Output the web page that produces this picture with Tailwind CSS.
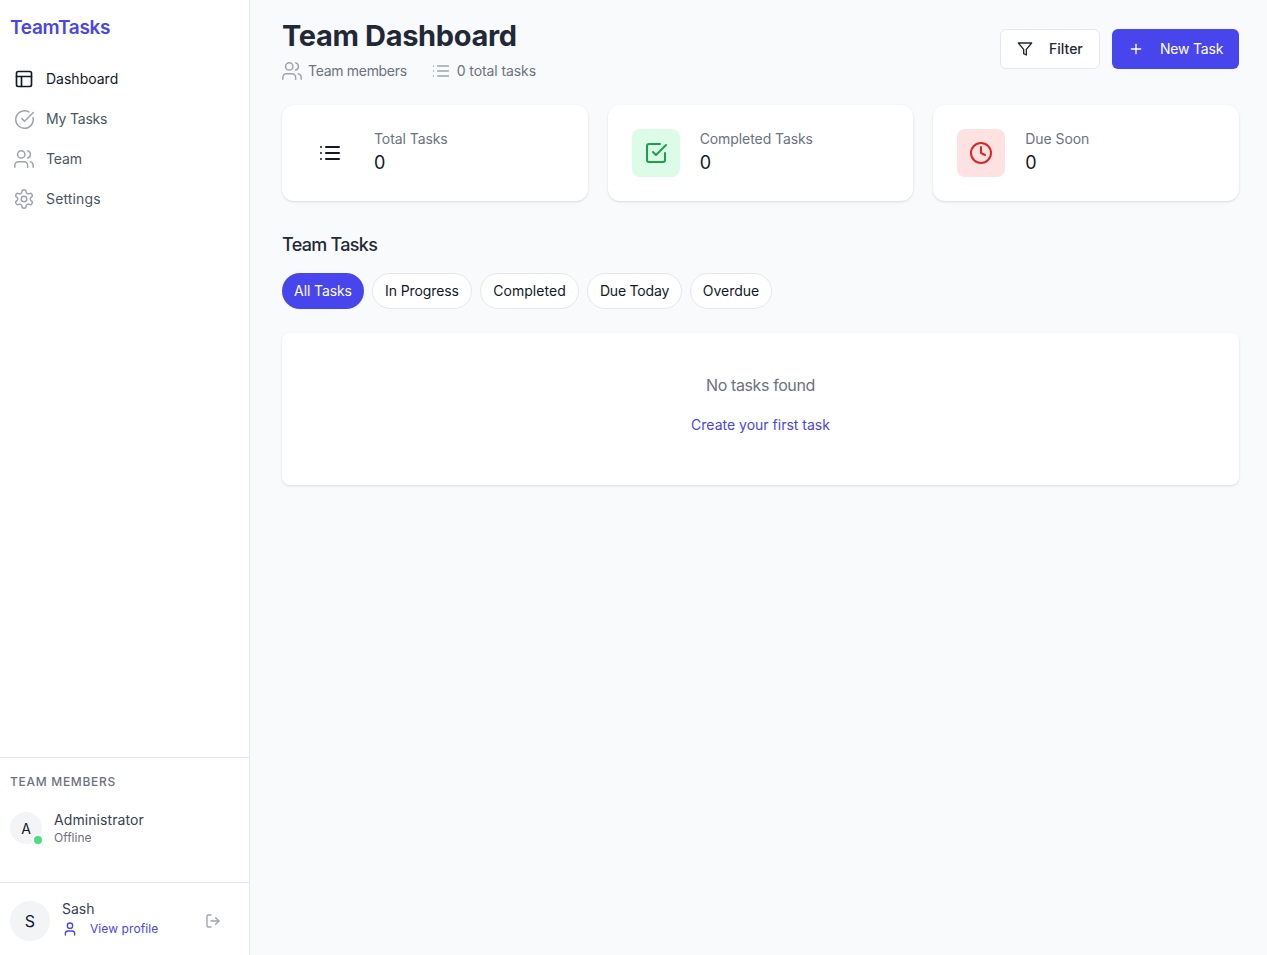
<!DOCTYPE html>
<html lang="en">
<head>
<meta charset="utf-8">
<title>TeamTasks</title>
<script src="https://cdn.jsdelivr.net/npm/@tailwindcss/browser@4"></script>
</head>
<body class="font-['Inter',sans-serif]">
<div class="flex h-[955px] w-[1267px] overflow-hidden bg-[#f9fafb]">
  <aside class="flex w-[250px] shrink-0 flex-col border-r border-[#e5e7eb] bg-white">
    <div class="flex-1">
      <div class="h-[59px] pl-[10px] pt-[14px] text-[19px] leading-[28px] font-semibold tracking-[-0.3px] text-[#4845ed]">TeamTasks</div>
      <nav class="flex flex-col px-[4px] text-[14px] leading-[20px]">
        <a class="flex h-[40px] items-center gap-[12px] px-[10px] text-[#111827]">
          <svg class="h-[20px] w-[20px]" viewBox="0 0 24 24" fill="none" stroke="currentColor" stroke-width="2" stroke-linecap="round" stroke-linejoin="round"><rect x="3" y="3" width="18" height="18" rx="2"/><path d="M3 9h18"/><path d="M9 21V9"/></svg>
          <span>Dashboard</span></a>
        <a class="flex h-[40px] items-center gap-[12px] px-[10px] text-[#4b5563]">
          <svg class="-m-[0.5px] h-[21px] w-[21px] text-[#9ca3af]" viewBox="0 0 24 24" fill="none" stroke="currentColor" stroke-width="1.7" stroke-linecap="round" stroke-linejoin="round"><path d="M21.801 10A10 10 0 1 1 17 3.335"/><path d="m9 11 3 3L22 4"/></svg>
          <span class="tracking-[-0.2px]">My Tasks</span></a>
        <a class="flex h-[40px] items-center gap-[12px] px-[10px] text-[#4b5563]">
          <svg class="-m-[1px] h-[22px] w-[22px] text-[#9ca3af]" viewBox="0 0 24 24" fill="none" stroke="currentColor" stroke-width="1.6" stroke-linecap="round" stroke-linejoin="round"><path d="M16 21v-2a4 4 0 0 0-4-4H6a4 4 0 0 0-4 4v2"/><circle cx="9" cy="7" r="4"/><path d="M22 21v-2a4 4 0 0 0-3-3.87"/><path d="M16 3.13a4 4 0 0 1 0 7.75"/></svg>
          <span class="tracking-[-0.1px]">Team</span></a>
        <a class="flex h-[40px] items-center gap-[12px] px-[10px] text-[#4b5563]">
          <svg class="-m-[1px] h-[22px] w-[22px] text-[#9ca3af]" viewBox="0 0 24 24" fill="none" stroke="currentColor" stroke-width="1.6" stroke-linecap="round" stroke-linejoin="round"><path d="M12.22 2h-.44a2 2 0 0 0-2 2v.18a2 2 0 0 1-1 1.73l-.43.25a2 2 0 0 1-2 0l-.15-.08a2 2 0 0 0-2.73.73l-.22.38a2 2 0 0 0 .73 2.73l.15.1a2 2 0 0 1 1 1.72v.51a2 2 0 0 1-1 1.74l-.15.09a2 2 0 0 0-.73 2.73l.22.38a2 2 0 0 0 2.73.73l.15-.08a2 2 0 0 1 2 0l.43.25a2 2 0 0 1 1 1.73V20a2 2 0 0 0 2 2h.44a2 2 0 0 0 2-2v-.18a2 2 0 0 1 1-1.73l.43-.25a2 2 0 0 1 2 0l.15.08a2 2 0 0 0 2.73-.73l.22-.39a2 2 0 0 0-.73-2.73l-.15-.08a2 2 0 0 1-1-1.74v-.5a2 2 0 0 1 1-1.74l.15-.09a2 2 0 0 0 .73-2.73l-.22-.38a2 2 0 0 0-2.73-.73l-.15.08a2 2 0 0 1-2 0l-.43-.25a2 2 0 0 1-1-1.73V4a2 2 0 0 0-2-2z"/><circle cx="12" cy="12" r="3"/></svg>
          <span class="tracking-[0.15px]">Settings</span></a>
      </nav>
    </div>
    <div class="h-[125px] border-t border-[#e5e7eb] px-[10px] pt-[16px]">
      <div class="text-[12px] leading-[16px] font-medium tracking-[0.7px] text-[#6b7280]">TEAM MEMBERS</div>
      <div class="mt-[20px] flex items-center gap-[12px]">
        <div class="relative flex h-[32px] w-[32px] items-center justify-center rounded-full bg-[#f3f4f6] text-[14px] text-[#111827]">A
          <span class="absolute -right-[2px] -bottom-[2px] h-[12px] w-[12px] rounded-full border-2 border-white bg-[#4ade80]"></span>
        </div>
        <div>
          <div class="text-[14px] leading-[20px] tracking-[0.08px] text-[#374151]">Administrator</div>
          <div class="text-[12px] leading-[16px] text-[#6b7280]">Offline</div>
        </div>
      </div>
    </div>
    <div class="flex h-[73px] items-center border-t border-[#e5e7eb] px-[10px] pt-[4px]">
      <div class="flex h-[40px] w-[40px] items-center justify-center rounded-full bg-[#f3f4f6] text-[16px] text-[#111827]">S</div>
      <div class="ml-[12px] flex-1 pb-[6px]">
        <div class="text-[14px] leading-[20px] text-[#374151]">Sash</div>
        <div class="mt-[2px] flex items-center gap-[12px] text-[12px] leading-[16px] tracking-[0.08px] text-[#4845ed]">
          <svg class="h-[16px] w-[16px]" viewBox="0 0 24 24" fill="none" stroke="currentColor" stroke-width="2" stroke-linecap="round" stroke-linejoin="round"><path d="M19 21v-2a4 4 0 0 0-4-4H9a4 4 0 0 0-4 4v2"/><circle cx="12" cy="7" r="4"/></svg>
          View profile</div>
      </div>
      <svg class="mr-[18px] h-[16px] w-[16px] text-[#9ca3af]" viewBox="0 0 24 24" fill="none" stroke="currentColor" stroke-width="2" stroke-linecap="round" stroke-linejoin="round"><path d="M9 21H5a2 2 0 0 1-2-2V5a2 2 0 0 1 2-2h4"/><path d="M16 17l5-5-5-5"/><path d="M21 12H9"/></svg>
    </div>
  </aside>
  <main class="min-w-0 flex-1 pl-[32px] pr-[28px] pt-[17px]">
    <header class="flex items-start justify-between">
      <div>
        <h1 class="mt-[1px] text-[29px] leading-[36px] font-bold tracking-[-0.35px] text-[#1f2937]">Team Dashboard</h1>
        <div class="mt-[7px] flex items-center gap-[24px] text-[14px] leading-[20px] text-[#6b7280]">
          <span class="flex items-center gap-[6px] tracking-[-0.3px]">
            <svg class="-m-[1px] mr-[-1px] h-[22px] w-[22px] text-[#9ca3af]" viewBox="0 0 24 24" fill="none" stroke="currentColor" stroke-width="1.6" stroke-linecap="round" stroke-linejoin="round"><path d="M16 21v-2a4 4 0 0 0-4-4H6a4 4 0 0 0-4 4v2"/><circle cx="9" cy="7" r="4"/><path d="M22 21v-2a4 4 0 0 0-3-3.87"/><path d="M16 3.13a4 4 0 0 1 0 7.75"/></svg>
            Team members</span>
          <span class="flex items-center gap-[6px] tracking-[-0.1px]">
            <svg class="h-[20px] w-[20px] text-[#9ca3af]" viewBox="0 0 24 24" fill="none" stroke="currentColor" stroke-width="1.6" stroke-linecap="round" stroke-linejoin="round"><path d="M8 6h13"/><path d="M8 12h13"/><path d="M8 18h13"/><path d="M3 6h.01"/><path d="M3 12h.01"/><path d="M3 18h.01"/></svg>
            0 total tasks</span>
        </div>
      </div>
      <div class="mt-[12px] flex gap-[12px] text-[14px] leading-[20px]">
        <button class="flex h-[40px] w-[100px] items-center gap-[16px] rounded-[6px] border border-[#e5e7eb] bg-white pl-[16px] font-medium text-[#1f2937]">
          <svg class="h-[16px] w-[16px]" viewBox="0 0 24 24" fill="none" stroke="currentColor" stroke-width="2" stroke-linecap="round" stroke-linejoin="round"><polygon points="22 3 2 3 10 12.46 10 19 14 21 14 12.46 22 3"/></svg>
          Filter</button>
        <button class="flex h-[40px] w-[127px] items-center gap-[16px] rounded-[6px] bg-[#4845ed] pl-[16px] tracking-[-0.2px] text-white">
          <svg class="h-[16px] w-[16px]" viewBox="0 0 24 24" fill="none" stroke="currentColor" stroke-width="2" stroke-linecap="round" stroke-linejoin="round"><path d="M5 12h14"/><path d="M12 5v14"/></svg>
          New Task</button>
      </div>
    </header>
    <section class="mt-[24px] grid grid-cols-3 gap-[20px]">
      <div class="flex h-[96px] items-center gap-[20px] rounded-[12px] bg-white px-[24px] shadow-sm">
        <div class="flex h-[48px] w-[48px] items-center justify-center rounded-[8px] text-[#111827]">
          <svg class="h-[24px] w-[24px]" viewBox="0 0 24 24" fill="none" stroke="currentColor" stroke-width="2" stroke-linecap="round" stroke-linejoin="round"><path d="M8 6h13"/><path d="M8 12h13"/><path d="M8 18h13"/><path d="M3 6h.01"/><path d="M3 12h.01"/><path d="M3 18h.01"/></svg>
        </div>
        <div class="pb-[3px]"><div class="text-[14px] leading-[20px] tracking-[-0.08px] text-[#6b7280]">Total Tasks</div><div class="mt-[2px] text-[18px] leading-[24px] text-[#111827]">0</div></div>
      </div>
      <div class="flex h-[96px] items-center gap-[20px] rounded-[12px] bg-white px-[24px] shadow-sm">
        <div class="flex h-[48px] w-[48px] items-center justify-center rounded-[8px] bg-[#dcfce7] text-[#16a34a]">
          <svg class="h-[24px] w-[24px]" viewBox="0 0 24 24" fill="none" stroke="currentColor" stroke-width="2" stroke-linecap="round" stroke-linejoin="round"><path d="M9 11l3 3L22 4"/><path d="M21 12v7a2 2 0 0 1-2 2H5a2 2 0 0 1-2-2V5a2 2 0 0 1 2-2h11"/></svg>
        </div>
        <div class="pb-[3px]"><div class="text-[14px] leading-[20px] tracking-[-0.08px] text-[#6b7280]">Completed Tasks</div><div class="mt-[2px] text-[18px] leading-[24px] text-[#111827]">0</div></div>
      </div>
      <div class="flex h-[96px] items-center gap-[20px] rounded-[12px] bg-white px-[24px] shadow-sm">
        <div class="flex h-[48px] w-[48px] items-center justify-center rounded-[8px] bg-[#fee2e2] text-[#dc2626]">
          <svg class="h-[24px] w-[24px]" viewBox="0 0 24 24" fill="none" stroke="currentColor" stroke-width="2" stroke-linecap="round" stroke-linejoin="round"><circle cx="12" cy="12" r="10"/><path d="M12 6v6l4 2"/></svg>
        </div>
        <div class="pb-[3px]"><div class="text-[14px] leading-[20px] tracking-[-0.08px] text-[#6b7280]">Due Soon</div><div class="mt-[2px] text-[18px] leading-[24px] text-[#111827]">0</div></div>
      </div>
    </section>
    <h2 class="mt-[30px] text-[18px] leading-[28px] font-medium tracking-[-0.7px] text-[#1f2937]">Team Tasks</h2>
    <div class="mt-[14px] flex gap-[8px] text-[14px] leading-[20px] text-[#111827]">
      <button class="h-[36px] w-[82px] rounded-full bg-[#4845ed] tracking-[-0.1px] text-white">All Tasks</button>
      <button class="h-[36px] w-[100px] rounded-full border border-[#e5e7eb] bg-white tracking-[-0.1px]">In Progress</button>
      <button class="h-[36px] w-[99px] rounded-full border border-[#e5e7eb] bg-white tracking-[0.05px]">Completed</button>
      <button class="h-[36px] w-[95px] rounded-full border border-[#e5e7eb] bg-white tracking-[-0.2px]">Due Today</button>
      <button class="h-[36px] w-[82px] rounded-full border border-[#e5e7eb] bg-white">Overdue</button>
    </div>
    <section class="mt-[24px] h-[152px] rounded-[8px] bg-white pt-[40px] text-center shadow-sm">
      <div class="text-[16px] leading-[24px] tracking-[-0.4px] text-[#6b7280]">No tasks found</div>
      <a class="mt-[18px] block text-[14px] leading-[20px] text-[#4845ed]">Create your first task</a>
    </section>
  </main>
</div>
</body>
</html>
